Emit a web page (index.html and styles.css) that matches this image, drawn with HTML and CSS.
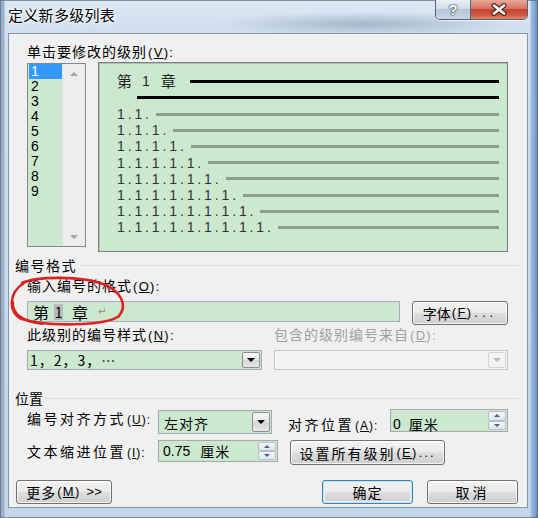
FILE: index.html
```html
<!DOCTYPE html>
<html lang="zh-CN">
<head>
<meta charset="utf-8">
<title>定义新多级列表</title>
<link rel="stylesheet" href="styles.css">
</head>
<body>
<div class="window">
  <div class="titlebar">
    <div class="title">定义新多级列表</div>
    <div class="caps">
      <div class="cap cap-help"><span>?</span></div>
      <div class="cap cap-close">
        <svg width="18" height="13" viewBox="0 0 18 13"><path d="M4 2.5 L14 10.5 M14 2.5 L4 10.5" stroke="#4a2a24" stroke-width="5" stroke-linecap="round"/><path d="M4 2.5 L14 10.5 M14 2.5 L4 10.5" stroke="#ffffff" stroke-width="2.6" stroke-linecap="round"/></svg>
      </div>
    </div>
  </div>
  <div class="client">
    <div class="lbl ind">单击要修改的级别<span class="acc">(<u>V</u>):</span></div>
    <div class="levels ind">
      <div class="listbox">
        <div class="items">
          <div class="item sel">1</div>
          <div class="item">2</div>
          <div class="item">3</div>
          <div class="item">4</div>
          <div class="item">5</div>
          <div class="item">6</div>
          <div class="item">7</div>
          <div class="item">8</div>
          <div class="item">9</div>
        </div>
        <div class="vscroll"><span class="tri tri-up"></span><span class="tri tri-down"></span></div>
      </div>
      <div class="preview">
        <div class="pv-head"><span class="pv-cjk">第</span><span class="pv-num">1</span><span class="pv-cjk pv-zhang">章</span><span class="bar bar-black bar-head"></span></div>
        <div class="bar bar-black bar-second"></div>
        <div class="pv-row"><span class="pv-txt">1.1.</span><span class="bar bar-gray"></span></div>
        <div class="pv-row"><span class="pv-txt">1.1.1.</span><span class="bar bar-gray"></span></div>
        <div class="pv-row"><span class="pv-txt">1.1.1.1.</span><span class="bar bar-gray"></span></div>
        <div class="pv-row"><span class="pv-txt">1.1.1.1.1.</span><span class="bar bar-gray"></span></div>
        <div class="pv-row"><span class="pv-txt">1.1.1.1.1.1.</span><span class="bar bar-gray"></span></div>
        <div class="pv-row"><span class="pv-txt">1.1.1.1.1.1.1.</span><span class="bar bar-gray"></span></div>
        <div class="pv-row"><span class="pv-txt">1.1.1.1.1.1.1.1.</span><span class="bar bar-gray"></span></div>
        <div class="pv-row"><span class="pv-txt">1.1.1.1.1.1.1.1.1.</span><span class="bar bar-gray"></span></div>
      </div>
    </div>

    <div class="group group-fmt">编号格式</div>
    <div class="lbl ind lbl-fmt">输入编号的格式<span class="acc">(<u>O</u>):</span></div>
    <div class="row-fmt ind">
      <div class="fmt-input"><span class="in-cjk">第</span><span class="hl">1</span><span class="in-cjk in-zhang">章</span><span class="ret">↵</span></div>
      <button class="btn btn-font">字体<span class="acc">(<u>F</u>)<span class="dots">...</span></span></button>
    </div>
    <div class="row-labels ind">
      <div class="lbl">此级别的编号样式<span class="acc">(<u>N</u>):</span></div>
      <div class="lbl disabled">包含的级别编号来自<span class="acc">(<u>D</u>):</span></div>
    </div>
    <div class="row-combos ind">
      <div class="combo combo-style"><span class="combo-text">1，2，3，⋯</span><span class="dd"><span class="tri-dd"></span></span></div>
      <div class="combo combo-from"><span class="dd dd-dis"><span class="tri-dd"></span></span></div>
    </div>

    <div class="group group-pos">位置</div>
    <div class="row-align ind">
      <div class="lbl lbl-wide lbl-u">编号对齐方式<span class="acc">(<u>U</u>):</span></div>
      <div class="combo combo-align"><span class="combo-text align-text">左对齐</span><span class="dd"><span class="tri-dd"></span></span></div>
      <div class="lbl lbl-at">对齐位置<span class="acc">(<u>A</u>):</span></div>
      <div class="spin spin-at">
        <span class="spin-text"><span class="num">0</span><span class="unit">厘米</span></span>
        <span class="spin-btns"><span class="sb"><span class="tri-s tri-s-up"></span></span><span class="sb"><span class="tri-s tri-s-down"></span></span></span>
      </div>
    </div>
    <div class="row-indent ind">
      <div class="lbl lbl-wide lbl-i">文本缩进位置<span class="acc">(<u>I</u>):</span></div>
      <div class="spin spin-indent">
        <span class="spin-text"><span class="num">0.75</span><span class="unit">厘米</span></span>
        <span class="spin-btns"><span class="sb"><span class="tri-s tri-s-up"></span></span><span class="sb"><span class="tri-s tri-s-down"></span></span></span>
      </div>
      <button class="btn btn-levels">设置所有级别<span class="acc">(<u>E</u>)<span class="dots2">...</span></span></button>
    </div>

    <div class="row-bottom">
      <button class="btn btn-more">更多<span class="acc">(<u>M</u>)<span class="gt">&gt;&gt;</span></span></button>
      <button class="btn btn-ok">确定</button>
      <button class="btn btn-cancel">取消</button>
    </div>

    <svg class="annot" width="130" height="60" viewBox="0 0 130 60">
      <path d="M17 8 C33 1, 77 1, 98 9 C116 16, 123 30, 114 41 C101 51, 41 52, 17 44 C3 38, 3 18, 19 8" fill="none" stroke="#dc2222" stroke-width="2.6" stroke-linecap="round"/>
      <path d="M8 27 C7 39, 17 46, 37 49" fill="none" stroke="#dc2222" stroke-width="2.2" stroke-linecap="round"/>
    </svg>
  </div>
</div>
</body>
</html>
```
FILE: styles.css
```css
* { box-sizing: border-box; }
html, body { margin: 0; padding: 0; }
body {
  width: 538px;
  height: 518px;
  overflow: hidden;
  background: #c4d7ea;
  font-family: "Noto Sans CJK SC", "Noto Sans", sans-serif;
  color: #000;
}

.window {
  width: 538px;
  height: 518px;
  display: flex;
  flex-direction: column;
  background:
    radial-gradient(150px 12px at 365px 24px, rgba(120,142,166,0.5), rgba(120,142,166,0)),
    linear-gradient(90deg, rgba(150,170,194,0.9) 0, rgba(150,170,194,0.9) 4px, rgba(255,255,255,0) 5px, rgba(255,255,255,0) 530px, #9ebde2 531px, #86aad8 534px, #6a88ae 538px),
    linear-gradient(180deg, #dce8f4 0, #cfdfee 33px, #c3d6ea 100%);
  box-shadow: inset 0 0 0 1px rgba(70,90,115,0.6);
}

/* title bar */
.titlebar {
  height: 33px;
  flex: none;
  display: flex;
  align-items: flex-start;
  padding-left: 8px;
}
.title {
  margin-top: 5px;
  font-size: 15px;
  line-height: 20px;
  letter-spacing: 0.3px;
  text-shadow: 0 0 5px #fff, 0 0 3px #fff, 0 0 2px #fff;
}
.caps {
  margin-left: auto;
  margin-right: 10px;
  display: flex;
  height: 20px;
  border: 1px solid #51647a;
  border-top: none;
  border-radius: 0 0 5px 5px;
  overflow: hidden;
  box-shadow: 0 1px 0 rgba(255,255,255,0.6);
}
.cap {
  height: 100%;
  display: flex;
  align-items: center;
  justify-content: center;
}
.cap-help {
  width: 35px;
  border-right: 1px solid #51647a;
  background: linear-gradient(180deg, #e9eff6 0, #d3dde8 45%, #b7c7d8 50%, #c8d6e5 100%);
}
.cap-help span {
  font-family: "Liberation Sans", sans-serif;
  font-weight: bold;
  font-size: 15px;
  line-height: 18px;
  color: #fff;
  text-shadow: 0 0 1px #2d3a4a, 0 0 1px #2d3a4a, 0 0 2px #2d3a4a;
}
.cap-close {
  width: 56px;
  background: linear-gradient(180deg, #e9a99b 0, #d6735f 45%, #c5422c 50%, #cf5a41 80%, #e28a6f 100%);
}

/* client area */
.client {
  position: relative;
  flex: none;
  height: 475px;
  margin: 0 10px 0 8px;
  border: 1px solid #8194a9;
  background: #f0f0f0;
  padding: 9px 19px 0 6px;
  display: flex;
  flex-direction: column;
}
.ind { margin-left: 12px; }

.lbl {
  font-size: 14px;
  line-height: 16px;
  letter-spacing: 1px;
  white-space: nowrap;
}
.acc {
  font-family: "Liberation Sans", sans-serif;
  font-size: 13px;
  letter-spacing: 1.3px;
  margin-left: 1px;
}
.acc u { text-underline-offset: 1px; }
.disabled { color: #a0a0a0; }

/* level list + preview */
.levels {
  display: flex;
  align-items: flex-start;
  margin-top: 1px;
}
.listbox {
  width: 59px;
  height: 184px;
  margin-top: 1px;
  border: 1px solid #828790;
  background: #fff;
  display: flex;
}
.items {
  width: 34px;
  background: #cce8cf;
  padding-left: 1px;
}
.item {
  height: 15px;
  line-height: 15px;
  padding-left: 2px;
  font-family: "Liberation Sans", sans-serif;
  font-size: 14px;
}
.item.sel { background: #3399ff; color: #fff; }
.vscroll {
  width: 23px;
  background: #ecedec;
  border-left: 1px solid #e0e2e0;
  display: flex;
  flex-direction: column;
  justify-content: space-between;
  align-items: center;
  padding: 8px 0 7px;
}
.tri {
  width: 0;
  height: 0;
  border-left: 4px solid transparent;
  border-right: 4px solid transparent;
}
.tri-up { border-bottom: 4px solid #a0a4a8; }
.tri-down { border-top: 4px solid #a0a4a8; }

.preview {
  width: 410px;
  height: 190px;
  margin-left: 12px;
  border: 1px solid #7b7f7b;
  background: #cce8cf;
  padding: 9px 8px 0 18px;
  box-shadow: inset 1px 1px 0 #b0c2b0;
}
.pv-head {
  height: 18px;
  display: flex;
  align-items: center;
  color: #222;
}
.pv-cjk { font-size: 15px; line-height: 18px; }
.pv-num {
  font-family: "Liberation Sans", sans-serif;
  font-size: 14px;
  margin-left: 10px;
}
.pv-zhang { margin-left: 11px; }
.bar { height: 3px; }
.bar-black { background: #000; }
.bar-head { flex: 1; margin-left: 14px; }
.bar-second { margin: 6px 0 7px 20px; }
.pv-row {
  height: 16.2px;
  display: flex;
  align-items: center;
}
.pv-txt {
  font-family: "Liberation Sans", sans-serif;
  font-size: 14px;
  line-height: 16px;
  letter-spacing: 2.87px;
  color: #333;
}
.bar-gray { flex: 1; margin-left: 4px; background: #8a9e8a; }

/* group headers */
.group {
  display: flex;
  align-items: center;
  height: 16px;
  margin-right: -11px;
  font-size: 14px;
  line-height: 16px;
  letter-spacing: 1.5px;
  white-space: nowrap;
}
.group::after {
  content: "";
  flex: 1;
  height: 1px;
  margin-left: 3px;
  background: #d6dde4;
}
.group-fmt { margin-top: 5px; }
.group-pos { margin-top: 20px; letter-spacing: 0; }

/* number format */
.lbl-fmt { margin-top: 4px; }
.row-fmt {
  display: flex;
  align-items: flex-start;
  height: 25px;
  margin-top: 5px;
}
.fmt-input {
  width: 373px;
  height: 21px;
  margin-top: 1px;
  border: 1px solid #a5acb5;
  background: #cce8cf;
  display: flex;
  align-items: center;
  padding-left: 5px;
}
.in-cjk { font-size: 16px; line-height: 18px; }
.hl {
  display: inline-block;
  width: 9px;
  margin-left: 5px;
  background: #b9b9b9;
  text-align: center;
  font-size: 14px;
  line-height: 16px;
}
.in-zhang { margin-left: 9px; }
.ret {
  margin-left: 10px;
  font-family: "DejaVu Sans", sans-serif;
  font-size: 10px;
  color: #8a8a8a;
}

/* buttons */
.btn {
  display: flex;
  align-items: center;
  justify-content: center;
  padding: 0;
  border: 1px solid #707070;
  border-radius: 3px;
  background: linear-gradient(180deg, #f2f2f2 0, #ebebeb 48%, #dddddd 52%, #cfcfcf 100%);
  box-shadow: inset 0 0 0 1px rgba(255,255,255,0.75);
  font-family: "Noto Sans CJK SC", sans-serif;
  font-size: 14px;
  line-height: 20px;
  letter-spacing: 1px;
  color: #000;
  white-space: nowrap;
}
.btn-font {
  width: 96px;
  height: 24px;
  margin-top: 1px;
  margin-left: 12px;
  letter-spacing: 0;
}
.dots { letter-spacing: 4px; margin-left: 2px; }
.dots2 { letter-spacing: 2px; margin-left: 1px; }
.gt { margin-left: 6px; letter-spacing: 0; }

/* style combos */
.row-labels {
  display: grid;
  grid-template-columns: 247px 1fr;
  margin-top: 1px;
}
.row-combos {
  display: flex;
  margin-top: 6px;
}
.combo {
  display: flex;
  align-items: center;
  border: 1px solid #a8a8a8;
  background: #cce8cf;
}
.combo-style { width: 235px; height: 20px; }
.combo-from {
  width: 234px;
  height: 20px;
  margin-left: 12px;
  background: #f4f4f4;
  border-color: #c4c4c4;
}
.combo-text {
  padding-left: 2px;
  font-size: 14px;
  line-height: 18px;
  letter-spacing: 1px;
  white-space: nowrap;
}
.dd {
  margin-left: auto;
  margin-right: 1px;
  width: 18px;
  height: calc(100% - 2px);
  border: 1px solid #8f8f8f;
  border-radius: 2px;
  background: linear-gradient(180deg, #f6f6f6 0, #e6e6e6 50%, #d6d6d6 51%, #e6e6e6 100%);
  display: flex;
  align-items: center;
  justify-content: center;
}
.tri-dd {
  width: 0;
  height: 0;
  border-left: 4px solid transparent;
  border-right: 4px solid transparent;
  border-top: 4px solid #000;
}
.dd-dis { border-color: #d3d3d3; background: #f4f4f4; }
.dd-dis .tri-dd { border-top-color: #b8b8b8; }

/* position */
.row-align {
  display: flex;
  align-items: flex-start;
  height: 25px;
  margin-top: 3px;
}
.row-indent {
  display: flex;
  align-items: flex-start;
  height: 25px;
  margin-top: 6px;
}
.lbl-wide {
  width: 131px;
  letter-spacing: 2.5px;
}
.lbl-u { line-height: 18px; }
.lbl-i { line-height: 23px; }
.lbl-wide .acc, .lbl-at .acc { font-size: 12px; letter-spacing: 1px; }
.combo-align {
  width: 114px;
  height: 24px;
  margin-top: 1px;
}
.align-text { padding-left: 5px; padding-top: 1px; }
.lbl-at {
  width: 102px;
  margin-left: 16px;
  margin-top: 6px;
  line-height: 18px;
  letter-spacing: 2.5px;
}
.spin {
  display: flex;
  align-items: stretch;
  border: 1px solid #a8a8a8;
  background: #cce8cf;
}
.spin-at { width: 118px; height: 23px; }
.spin-indent { width: 120px; height: 22px; }
.spin-text {
  flex: 1;
  display: flex;
  align-items: center;
  white-space: nowrap;
}
.spin-at .spin-text { padding-left: 2px; padding-top: 6px; }
.spin-indent .spin-text { padding-left: 4px; }
.num {
  font-family: "Liberation Sans", sans-serif;
  font-size: 14px;
  line-height: 16px;
}
.unit {
  font-size: 14px;
  line-height: 16px;
  letter-spacing: 1px;
  margin-left: 8px;
}
.spin-indent .unit { margin-left: 10px; }
.spin-btns {
  width: 19px;
  display: flex;
  flex-direction: column;
  padding: 1px 1px 1px 0;
}
.sb {
  flex: 1;
  border: 1px solid #b6bec8;
  border-radius: 2px;
  background: linear-gradient(180deg, #f4f7fa 0, #dde5ee 100%);
  display: flex;
  align-items: center;
  justify-content: center;
}
.tri-s {
  width: 0;
  height: 0;
  border-left: 3px solid transparent;
  border-right: 3px solid transparent;
}
.tri-s-up { border-bottom: 3px solid #4a5e80; }
.tri-s-down { border-top: 3px solid #4a5e80; }
.btn-levels {
  width: 155px;
  height: 25px;
  margin-left: 12px;
  letter-spacing: 2px;
}

/* bottom buttons */
.row-bottom {
  display: flex;
  margin-top: 15px;
  margin-left: 1px;
  margin-right: -10px;
}
.btn-more { width: 96px; height: 24px; }
.btn-ok {
  width: 91px;
  height: 24px;
  margin-left: auto;
  border-color: #3c7fb1;
  box-shadow: inset 0 0 0 1px #bfe3f7, inset 0 0 0 2px #e4f3fb;
}
.btn-cancel {
  width: 91px;
  height: 24px;
  margin-left: 14px;
  letter-spacing: 3px;
}

/* red hand-drawn annotation over the format field */
.annot {
  position: absolute;
  left: -4px;
  top: 241px;
  overflow: visible;
  pointer-events: none;
}
```
